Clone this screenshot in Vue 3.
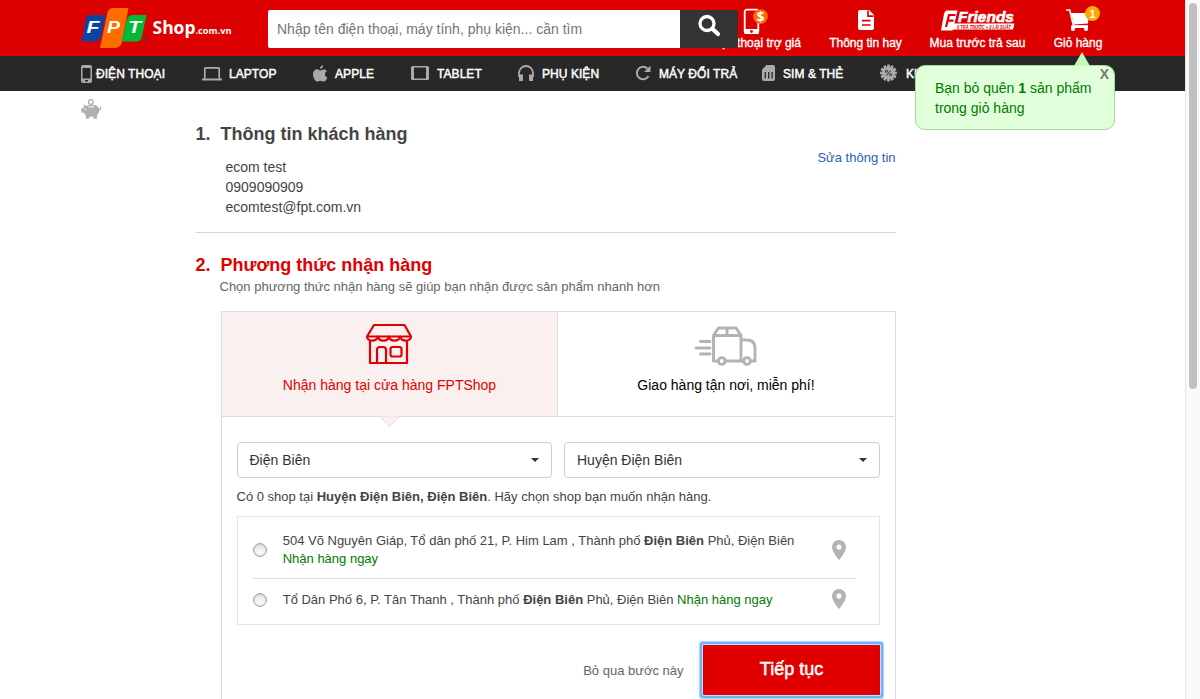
<script setup>
import { ref } from 'vue'

const navItems = [
  { id: 'phone', label: 'ĐIỆN THOẠI' },
  { id: 'laptop', label: 'LAPTOP' },
  { id: 'apple', label: 'APPLE' },
  { id: 'tablet', label: 'TABLET' },
  { id: 'headphone', label: 'PHỤ KIỆN' },
  { id: 'renew', label: 'MÁY ĐỔI TRẢ' },
  { id: 'sim', label: 'SIM & THẺ' },
  { id: 'promo', label: 'KHUYẾN MÃI' },
]
const teeth = [0, 30, 60, 90, 120, 150, 180, 210, 240, 270, 300, 330]
const keyword = ref('')
const store = ref(null)
</script>

<template>
  <div class="page">
    <div class="view">
      <header class="top">
        <a class="logo">
          <svg width="154" height="42" viewBox="0 0 154 42">
            <path d="M8.500 7H24.500l-4 20q-1.500 6.500-7 6.500H.500L4.500 13q1-6 4-6z" fill="#0a45a5" />
            <path d="M32 0h15.500l-6.500 33.500q-1 6.500-7 6.500H19l7-33.500q1-6.500 6-6.500z" fill="#ff6c00" />
            <path d="M52 7h13.500l-4.500 21q-1 5.500-6 5.500H40.500l5-21q1.500-5.500 6.500-5.500z" fill="#00ba35" />
            <g class="mark">
              <text x="5.500" y="25" font-size="16" textLength="13" lengthAdjust="spacingAndGlyphs">F</text>
              <text x="26" y="25" font-size="16" textLength="13" lengthAdjust="spacingAndGlyphs">P</text>
              <text x="47" y="25" font-size="16" textLength="13" lengthAdjust="spacingAndGlyphs">T</text>
            </g>
            <text x="61.500" y="33.500" fill="#1b3f92" font-size="6.500" font-family="Liberation Sans, sans-serif">®</text>
            <g fill="#fff" font-family="Open Sans, sans-serif" font-weight="700">
              <text x="71.500" y="26" font-size="18" textLength="43" lengthAdjust="spacingAndGlyphs">Shop</text>
              <text x="114.500" y="26" font-size="9.500" textLength="36" lengthAdjust="spacingAndGlyphs">.com.vn</text>
            </g>
          </svg>
        </a>
        <form class="search" @submit.prevent>
          <input v-model="keyword" class="field" placeholder="Nhập tên điện thoại, máy tính, phụ kiện... cần tìm" />
          <button class="find" aria-label="search">
            <svg width="24" height="24" viewBox="0 0 24 24" fill="none" stroke="#fff">
              <circle cx="9" cy="9.500" r="7" stroke-width="3.300" />
              <path d="M14.300 14.800 20 20" stroke-width="4.200" stroke-linecap="round" />
            </svg>
          </button>
        </form>
        <ul class="links">
          <li class="link trade">
            <svg width="28" height="28" viewBox="0 0 28 28">
              <rect x="4.700" y="2.700" width="13.600" height="23.300" rx="2" fill="none" stroke="#fff" stroke-width="1.800" />
              <path d="M4 22h15v3.500q0 1.500-1.500 1.500h-12Q4 27 4 25.500z" fill="#fff" />
              <circle cx="11.500" cy="24.500" r="1.400" fill="#d00" />
              <circle cx="20.500" cy="9.500" r="7.300" fill="#ff6c00" />
              <text x="20.500" y="14.500" text-anchor="middle" fill="#fff" font-family="Open Sans, sans-serif" font-weight="700" font-size="13.500">$</text>
            </svg>
            <span>Điện thoại trợ giá</span>
          </li>
          <li class="link news">
            <svg width="28" height="28" viewBox="0 0 28 28">
              <path d="M8 3h9l5 5v13q0 2-2 2H8q-2 0-2-2V5q0-2 2-2z" fill="#fff" />
              <path d="M16 3.500v5.700h5.500M10 13.700h8.500M10 18h8.500" fill="none" stroke="#d00" stroke-width="1.700" />
            </svg>
            <span>Thông tin hay</span>
          </li>
          <li class="link friends">
            <svg width="80" height="28" viewBox="0 0 80 28">
              <path d="M8 3.500h10.500l-3 13h60L74 22.500H14.500L13 23.500H2L5 7q1-3.500 3-3.500z" fill="#fff" />
              <path d="m7 20 3-12h6.500M8.500 13.700h6" stroke="#d00" stroke-width="2.200" fill="none" />
              <text x="19" y="15" font-size="14.500" font-weight="700" font-style="italic" fill="#fff" stroke="#fff" stroke-width=".6" font-family="Liberation Sans, sans-serif" textLength="56" lengthAdjust="spacingAndGlyphs">Friends</text>
              <text x="18" y="21.500" font-size="5.500" font-weight="700" font-style="italic" fill="#d00" font-family="Liberation Sans, sans-serif" textLength="54" lengthAdjust="spacingAndGlyphs">0 TRẢ TRƯỚC + 0 LÃI SUẤT</text>
            </svg>
            <span>Mua trước trả sau</span>
          </li>
          <li class="link cart">
            <svg width="38" height="30" viewBox="0 0 38 30">
              <path d="M4 5h3.700l3.800 16h14.500" fill="none" stroke="#fff" stroke-width="1.600" />
              <path d="M9 8h18l-1 10.500-14 1z" fill="#fff" />
              <path d="M9 20.500h17V23H9z" fill="#fff" />
              <circle cx="11" cy="24" r="2.100" fill="#fff" />
              <circle cx="24" cy="24" r="2.100" fill="#fff" />
              <circle cx="30.500" cy="8.500" r="7.500" fill="#fa0" />
              <text x="30.500" y="12.500" text-anchor="middle" fill="#fff" font-family="Liberation Sans, sans-serif" font-weight="700" font-size="11">1</text>
            </svg>
            <span>Giỏ hàng</span>
          </li>
        </ul>
      </header>

      <nav class="nav">
        <a v-for="item in navItems" :key="item.id" class="nav-item" :class="item.id">
          <svg width="20" height="20" viewBox="0 0 20 20">
            <g v-if="item.id === 'phone'">
              <path fill-rule="evenodd" fill="#aaa" d="M2 1h7q2 0 2 2v14q0 2-2 2H2q-2 0-2-2V3q0-2 2-2zM1.500 4v10.500h8V4zM4 16v1.500h3V16z" />
            </g>
            <g v-else-if="item.id === 'laptop'">
              <path d="M2.800 15V4.500q0-.700.700-.700h13q.700 0 .700.700V15" fill="none" stroke="#aaa" stroke-width="1.700" />
              <path d="M0 14.500h20v2H0z" fill="#aaa" />
            </g>
            <path v-else-if="item.id === 'apple'" fill="#aaa" d="M10 1q.200 3.500-3 4Q7 2 10 1zM7.200 6.400c1.500 0 2.200-1.200 4-.900 1.200.200 2.100.800 2.600 1.700-2.800 1.700-2.300 5.200.500 6.200C13.500 15.500 12.300 17.600 10.700 17.600c-1.200 0-1.700-.800-3.200-.800s-2 .800-3.200.800C2.500 17.600 0 13.700 0 10.400 0 7.400 2 5.300 4.200 5.300c1.300 0 2 1.100 3 1.100z" />
            <g v-else-if="item.id === 'tablet'">
              <rect x="0" y="2" width="18" height="14" rx="1.500" fill="#aaa" />
              <path d="M3 3.500h12v11H3z" fill="#282828" />
            </g>
            <g v-else-if="item.id === 'headphone'" fill="none" stroke="#aaa">
              <path d="M1 13V9a7 7 0 0 1 14 0v4" stroke-width="1.800" />
              <path d="M3 10.500V17M13 10.500V17" stroke-width="4" />
            </g>
            <g v-else-if="item.id === 'renew'">
              <path d="M12.500 4.700A6.200 6.200 0 1 0 13.500 12" fill="none" stroke="#aaa" stroke-width="2" />
              <path d="M15.500 1.500V8H9z" fill="#aaa" />
            </g>
            <g v-else-if="item.id === 'sim'">
              <path d="M4.500 1H11q2 0 2 2v12q0 2-2 2H2q-2 0-2-2V5.500z" fill="#aaa" />
              <path d="M3.300 8v6.500M6.700 8v6.500M10.100 8v6.500" stroke="#282828" stroke-width="1.300" />
            </g>
            <g v-else>
              <rect v-for="a in teeth" :key="a" x="7.300" y=".700" width="2.400" height="16.600" fill="#aaa" :transform="`rotate(${a} 8.500 9)`" />
              <circle cx="8.500" cy="9" r="6.300" fill="#aaa" />
              <g fill="none" stroke="#282828" stroke-width="1">
                <path d="m6.500 11.500 4-5" /><circle cx="6.500" cy="7.300" r="1" /><circle cx="10.500" cy="10.700" r="1" />
              </g>
            </g>
          </svg>
          <span class="nav-label">{{ item.label }}</span>
        </a>
      </nav>

      <svg class="pig" width="21" height="22" viewBox="0 0 21 22">
        <circle cx="9.800" cy="4" r="2.400" fill="none" stroke="#b0b0b0" stroke-width="1.300" />
        <path fill="#b0b0b0" d="M2.500 6.300 5.500 8Q7.500 6.700 10.500 6.700c4.500 0 7.300 1.500 7.700 4.500L19 10.500V8.800h1.200v2.500l-1.900 1.500q-.300 2.500-2.300 4.200v3.800h-3.500v-2H8.300v2H4.800V17q-1.500-.800-2.300-2.500H.300v-4.200h1.900L3 9z" />
        <path d="M7.500 8.800h5.500" stroke="#fff" stroke-width="1.100" />
        <circle cx="4.500" cy="11.300" r=".8" fill="#fff" />
      </svg>

      <div class="bubble">
        <span class="tail"></span>
        <p>Bạn bỏ quên <b>1</b> sản phẩm<br />trong giỏ hàng</p>
        <button class="close">X</button>
      </div>

      <main class="main">
        <section class="customer">
          <h2 class="title"><span class="no">1.</span><span>Thông tin khách hàng</span></h2>
          <div class="info">
            <p>ecom test<br />0909090909<br />ecomtest@fpt.com.vn</p>
            <a class="edit">Sửa thông tin</a>
          </div>
        </section>
        <section class="method">
          <h2 class="title red"><span class="no">2.</span><span>Phương thức nhận hàng</span></h2>
          <p class="hint">Chọn phương thức nhận hàng sẽ giúp bạn nhận được sản phẩm nhanh hơn</p>
          <div class="box">
            <div class="tabs">
              <div class="tab on">
                <svg width="48" height="44" viewBox="0 0 48 44" fill="none" stroke="#e10000" stroke-width="2.200" stroke-linejoin="round">
                  <path d="M9 3h30.500l6.500 11.500H2z" />
                  <path d="M2 14.500c.5 5.500 9.500 5.500 11 0 1 5.500 10 5.500 11 0 1 5.500 10 5.500 11 0 1.500 5.500 10.500 5.500 11 0M5 19v22h37V19" />
                  <path d="M12 41V28q0-3 3-3h3q3 0 3 3v13" />
                  <rect x="25.500" y="25" width="11" height="9.500" rx="2" />
                </svg>
                <span>Nhận hàng tại cửa hàng FPTShop</span>
              </div>
              <div class="tab">
                <svg width="64" height="44" viewBox="0 0 64 44" fill="none" stroke="#b3b3b3" stroke-width="2.900" stroke-linejoin="round" stroke-linecap="round">
                  <path d="M24 39h-4.500V13.500l5-7.500H42l5 7.500V39H31M19.500 13.500H47M33 7v6M47 18h5.500q8.500 0 8.500 8v13h-3M47 39h3M6.500 19.500H16M2 26h14M6.500 32H16" />
                  <circle cx="27.800" cy="39" r="3.400" /><circle cx="53" cy="39" r="3.400" />
                </svg>
                <span>Giao hàng tận nơi, miễn phí!</span>
              </div>
            </div>
            <div class="panel">
              <div class="selects">
                <div class="select"><span>Điện Biên</span><i class="caret"></i></div>
                <div class="select"><span>Huyện Điện Biên</span><i class="caret"></i></div>
              </div>
              <p class="count">Có 0 shop tại <b>Huyện Điện Biên, Điện Biên</b>. Hãy chọn shop bạn muốn nhận hàng.</p>
              <div class="shops">
                <label class="shop first">
                  <input v-model="store" class="radio" type="radio" value="a" />
                  <span class="addr">504 Võ Nguyên Giáp, Tổ dân phố 21, P. Him Lam , Thành phố <b>Điện Biên</b> Phủ, Điện Biên<br /><em>Nhận hàng ngay</em></span>
                  <svg class="pin" width="14" height="20" viewBox="0 0 14 20"><path fill-rule="evenodd" fill="#b3b3b3" d="M7 0a7 7 0 0 1 7 7c0 5-7 13-7 13S0 12 0 7a7 7 0 0 1 7-7zm0 4.500a2.600 2.600 0 1 0 0 5.200 2.600 2.600 0 0 0 0-5.200z" /></svg>
                </label>
                <label class="shop">
                  <input v-model="store" class="radio" type="radio" value="b" />
                  <span class="addr">Tổ Dân Phố 6, P. Tân Thanh , Thành phố <b>Điện Biên</b> Phủ, Điện Biên <em>Nhận hàng ngay</em></span>
                  <svg class="pin" width="14" height="20" viewBox="0 0 14 20"><path fill-rule="evenodd" fill="#b3b3b3" d="M7 0a7 7 0 0 1 7 7c0 5-7 13-7 13S0 12 0 7a7 7 0 0 1 7-7zm0 4.500a2.600 2.600 0 1 0 0 5.200 2.600 2.600 0 0 0 0-5.200z" /></svg>
                </label>
              </div>
              <div class="actions">
                <a class="skip">Bỏ qua bước này</a>
                <button class="next">Tiếp tục</button>
              </div>
            </div>
          </div>
        </section>
      </main>
    </div>
    <div class="track"><div class="thumb"></div></div>
  </div>
</template>

<style>
html, body { margin: 0; overflow: hidden; background: #fff; }
</style>

<style scoped>
* { box-sizing: border-box; }
p, h2, ul { margin: 0; padding: 0; }
button { border: 0; padding: 0; font-family: inherit; }
.page { display: flex; width: 1200px; height: 699px; overflow: hidden; font: 14px/20px "Liberation Sans", Arial, sans-serif; color: #444; }
.view { position: relative; width: 1185px; height: 699px; overflow: hidden; }
.track { width: 15px; background: #fafafa; border-left: 1px solid #e6e6e6; padding: 3px 0 0 3px; }
.thumb { width: 8px; height: 386px; border-radius: 4px; background: #c1c1c1; }

.top { display: flex; height: 56px; background: #d00; }
.logo { width: 187px; margin-left: 81px; padding-top: 8px; height: 56px; }
.logo svg { display: block; }
.mark { fill: #fff; font-family: "Liberation Sans", sans-serif; font-weight: 700; font-style: italic; }
.search { position: relative; z-index: 1; display: flex; width: 470px; height: 38px; margin-top: 10px; flex: none; }
.field { width: 412px; border: 0; outline: 0; padding: 0 0 0 9px; background: #fff; font: 14px "Liberation Sans", Arial, sans-serif; border-radius: 2px 0 0 2px; }
.field::placeholder { color: #757575; }
.find { width: 58px; background: #333; border-radius: 0 2px 2px 0; }
.find svg { display: block; margin: -6px auto 0 18px; }
.links { display: flex; list-style: none; margin-left: -34px; }
.link { position: relative; display: flex; flex-direction: column; align-items: center; flex: none; padding-top: 7px; color: #fff; font-size: 12px; line-height: 16px; white-space: nowrap; -webkit-text-stroke: .35px #fff; }
.link svg { -webkit-text-stroke: 0; height: 28px; overflow: visible; }
.trade { width: 100px; }
.trade span { margin-left: 2px; }
.trade svg { margin-left: -1px; }
.news { width: 73px; margin-left: 25px; }
.friends { width: 97px; margin-left: 27px; }
.friends svg { margin-left: 2px; }
.cart { width: 50px; margin-left: 27px; }
.cart svg { height: 30px; margin: -2px 0 0 6px; }

.nav { display: grid; grid-template-columns: 121px 111px 98px 107px 117px 127px 118px 120px; height: 35px; padding-left: 81px; background: #282828; }
.nav-item { display: grid; grid-template-columns: 24px auto; align-items: center; color: #fff; font-size: 12px; white-space: nowrap; justify-content: start; }
.nav-label { -webkit-text-stroke: .45px #fff; letter-spacing: .06px; }
.phone { grid-template-columns: 15px auto; }
.laptop { grid-template-columns: 27px auto; }
.apple { grid-template-columns: 22px auto; }
.tablet { grid-template-columns: 26px auto; }
.sim { grid-template-columns: 21px auto; }
.promo { grid-template-columns: 26px auto; }
.pig { position: absolute; left: 81px; top: 98px; }

.bubble { position: absolute; z-index: 3; left: 915px; top: 65px; width: 200px; height: 65px; padding: 12px 0 0 19px; border: 1px solid #9de08c; border-radius: 10px; background: #e1ffdb; color: #007a00; white-space: nowrap; }
.tail { position: absolute; left: 158px; top: -14px; border: solid transparent; border-width: 0 8px 14px; border-bottom-color: #c3fbb8; }
.close { position: absolute; right: 5px; top: 0; background: none; color: #777; font: 700 14px/17px "Liberation Sans", sans-serif; }

.main { width: 701px; margin: 32px 0 0 195px; }
.title { display: flex; font-size: 18px; line-height: 22px; color: #444; }
.no { width: 25px; }
.red .no { padding-left: .5px; width: 25.5px; }
.customer { height: 110px; border-bottom: 1px solid #d6d6d6; margin-left: 1px; }
.customer .title { margin-left: -.5px; }
.info { display: flex; justify-content: space-between; padding: 12px .5px 0 29.5px; }
.edit { margin-top: -9px; font-size: 13px; color: #2a5eb8; }
.method { padding-top: 21px; }
.red { color: #e10000; }
.hint { padding: 1px 0 0 24.5px; font-size: 13px; line-height: 20px; color: #666; }
.box { margin: 14px 0 0 26px; width: 675px; height: 420px; border: 1px solid #dcdcdc; }
.tabs { display: flex; width: 672px; border-bottom: 1px solid #dcdcdc; }
.tab { position: relative; display: flex; flex-direction: column; align-items: center; width: 336px; height: 104px; padding-top: 10px; color: #000; white-space: nowrap; }
.tab svg { display: block; margin-bottom: 9px; }
.tab.on svg { margin-left: -1px; }
.tab.on { background: #faf0f0; color: #e10000; border-right: 1px solid #dcdcdc; }
.tab.on::after { content: ""; position: absolute; left: 160px; bottom: -8px; width: 14px; height: 14px; background: #faf0f0; border: solid #dcdcdc; border-width: 0 1px 1px 0; transform: rotate(45deg); clip-path: polygon(100% 0, 100% 100%, 0 100%); }
.panel { padding: 25px 0 0 15px; }
.selects { display: flex; gap: 12px; }
.select { display: flex; justify-content: space-between; align-items: center; width: 315px; height: 36px; padding: 0 12px 0 11.5px; border: 1px solid #ccc; border-radius: 4px; color: #333; }
.select + .select { width: 316px; padding-left: 12px; }
.caret { border: solid transparent; border-width: 4px 4px 0; border-top-color: #333; }
.count { margin: 9px 0 0 -.5px; font-size: 13px; line-height: 20px; white-space: nowrap; }
.shops { margin-top: 9px; width: 643px; height: 109px; border: 1px solid #e4e4e4; padding-left: 15px; }
.shop { display: flex; align-items: center; width: 603px; height: 42px; font-size: 13px; line-height: 18px; }
.shop + .shop .pin { margin-bottom: 2px; }
.shop.first { height: 62px; padding-top: 5px; border-bottom: 1px solid #dcdcdc; }
.addr { width: 550px; padding-left: .7px; margin-left: 15px; white-space: nowrap; }
.addr em { font-style: normal; color: #007a00; }
.radio { appearance: none; flex: none; width: 14px; height: 14px; margin: 0; border: 1px solid #a6a6a6; border-radius: 50%; background: linear-gradient(#e4e4e4, #fff); box-shadow: inset 0 0 2px #aaa; }
.actions { display: flex; align-items: center; justify-content: flex-end; width: 643px; margin-top: 20px; }
.skip { margin: 2px 19.5px 0 0; font-size: 13px; color: #666; }
.next { width: 177px; height: 50px; padding-bottom: 1px; background: #e10000; color: #fff; font-size: 18px; -webkit-text-stroke: .5px #fff; box-shadow: 0 0 0 1px #c5e0ff, 0 0 0 3px #6db3fc, 0 0 1px 4px #a5d0ff; border-radius: 1px; }
</style>
